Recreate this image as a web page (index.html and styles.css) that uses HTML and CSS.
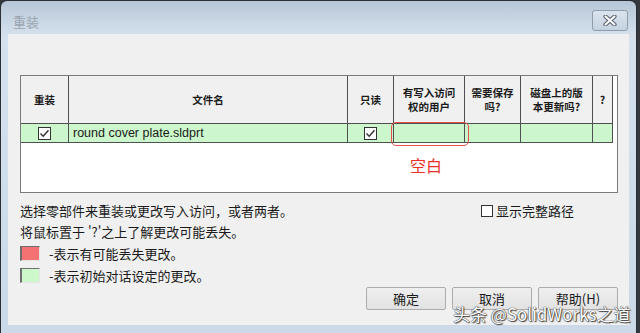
FILE: index.html
```html
<!DOCTYPE html>
<html lang="zh-CN">
<head>
  <meta charset="UTF-8">
  <title>重装</title>
  <link rel="stylesheet" href="styles.css">
</head>
<body>
  <div class="window">
    <div class="titlebar">
      <span class="title">重装</span>
      <div class="close">
        <svg width="14" height="11" viewBox="0 0 14 11">
          <path d="M2.5 1.5 L11.5 9.5 M11.5 1.5 L2.5 9.5" stroke="#5c6470" stroke-width="4.2" stroke-linecap="round"/>
          <path d="M2.5 1.5 L11.5 9.5 M11.5 1.5 L2.5 9.5" stroke="#fff" stroke-width="2" stroke-linecap="round"/>
        </svg>
      </div>
    </div>

    <div class="client">
      <div class="list">
        <div class="grid head">
          <div>重装</div>
          <div>文件名</div>
          <div>只读</div>
          <div>有写入访问<br>权的用户</div>
          <div>需要保存<br>吗?</div>
          <div>磁盘上的版<br>本更新吗?</div>
          <div>?</div>
        </div>
        <div class="grid item">
          <div class="mid"><span class="check"><svg width="13" height="13" viewBox="0 0 13 13"><path d="M2.5 6.5 L5.2 9.3 L10.5 3.2" fill="none" stroke="#333" stroke-width="1.4"/></svg></span></div>
          <div class="name">round cover plate.sldprt</div>
          <div class="mid"><span class="check"><svg width="13" height="13" viewBox="0 0 13 13"><path d="M2.5 6.5 L5.2 9.3 L10.5 3.2" fill="none" stroke="#333" stroke-width="1.4"/></svg></span></div>
          <div></div>
          <div></div>
          <div></div>
          <div></div>
        </div>
        <div class="mark"></div>
        <div class="mark-label">空白</div>
      </div>

      <div class="line first">
        <span>选择零部件来重装或更改写入访问，或者两者。</span>
        <label class="opt"><span class="check small"></span>显示完整路径</label>
      </div>
      <div class="line">将鼠标置于 '?'之上了解更改可能丢失。</div>
      <div class="line key"><span class="swatch red"></span>-表示有可能丢失更改。</div>
      <div class="line key"><span class="swatch green"></span>-表示初始对话设定的更改。</div>

      <div class="buttons">
        <button>确定</button>
        <button>取消</button>
        <button>帮助(H)</button>
      </div>

      <div class="watermark">头条 @SolidWorks之道</div>
    </div>
  </div>
</body>
</html>
```

FILE: styles.css
```css
body { margin: 0; background: #34393f; font-family: "Noto Sans CJK SC", "Liberation Sans", sans-serif; }
.window { width: 621px; height: 324px; border: 1px solid #2a2f35; border-bottom: 0; border-radius: 7px 7px 0 0; background: linear-gradient(#b7c6d7, #d5e1ed 34px, #cbd9e8); padding: 0 7px 8px 7px; display: flex; flex-direction: column; }
.titlebar { height: 33px; display: flex; align-items: flex-start; justify-content: space-between; }
.title { font-size: 13px; color: #9ba5b0; margin: 13px 0 0 5px; line-height: 16px; }
.close { width: 34px; height: 19px; margin-top: 9px; margin-right: 1px; border: 1px solid #8e9cad; border-radius: 3px; background: linear-gradient(#dbe4ee, #c5d2e0); display: flex; align-items: center; justify-content: center; }
.client { flex: 1; background: #f0f0f0; position: relative; padding: 41px 11px 0 12px; font-size: 13px; color: #1a1a1a; }

.list { position: relative; height: 116px; background: #fff; border: 1px solid #7a7a7a; }
.grid { display: grid; grid-template-columns: 48px 279px 46px 71px 56px 72px 20px; }
.grid > div { border-right: 1px solid #505050; border-bottom: 1px solid #505050; box-sizing: border-box; }
.head > div { height: 48px; background: #f0f0f0; display: flex; align-items: center; justify-content: center; text-align: center; font-size: 10.5px; font-weight: bold; line-height: 14px; }
.item > div { height: 19px; background: #ccf6cc; }
.item .mid { display: flex; align-items: center; justify-content: center; }
.item .name { font-family: "Liberation Sans", sans-serif; font-size: 12.5px; line-height: 18px; padding-left: 4px; }
.check { width: 13px; height: 13px; border: 1px solid #333; background: #fff; box-sizing: border-box; display: inline-flex; }
.check svg { margin: -1px; }

.mark { position: absolute; left: 370px; top: 46px; width: 78px; height: 24px; border: 1.5px solid #e8504a; border-radius: 5px; box-sizing: border-box; }
.mark-label { position: absolute; left: 389px; top: 80px; font-size: 16px; line-height: 18px; color: #e8302a; }

.line { height: 21px; line-height: 21px; display: flex; align-items: center; white-space: nowrap; }
.line.first { margin-top: 7px; }
.line.key { height: 22px; }
.opt { margin-left: auto; margin-right: 44px; display: flex; align-items: center; gap: 3px; }
.check.small { width: 12px; height: 12px; }
.swatch { width: 20px; height: 15px; margin-right: 9px; box-sizing: border-box; border-top: 1px solid #6e6e6e; border-left: 2px solid #6e6e6e; border-right: 1px solid #e4e4e4; border-bottom: 1px solid #e4e4e4; }
.swatch.red { background: #f57272; }
.swatch.green { background: #ccf8cc; }

.buttons { display: flex; justify-content: flex-end; gap: 6px; margin-top: 1px; }
.buttons button { width: 80px; height: 23px; font-family: "Noto Sans CJK SC", sans-serif; font-size: 13px; color: #1a1a1a; background: linear-gradient(#efefef, #e2e2e2); border: 1px solid #acacac; border-radius: 2px; padding: 0; }

.watermark { position: absolute; left: 445px; top: 270px; font-size: 17px; line-height: 20px; color: #fff; text-shadow: 0 0 1px #333, 0 0 1px #333, 1px 1px 1px #444; white-space: nowrap; }
```
